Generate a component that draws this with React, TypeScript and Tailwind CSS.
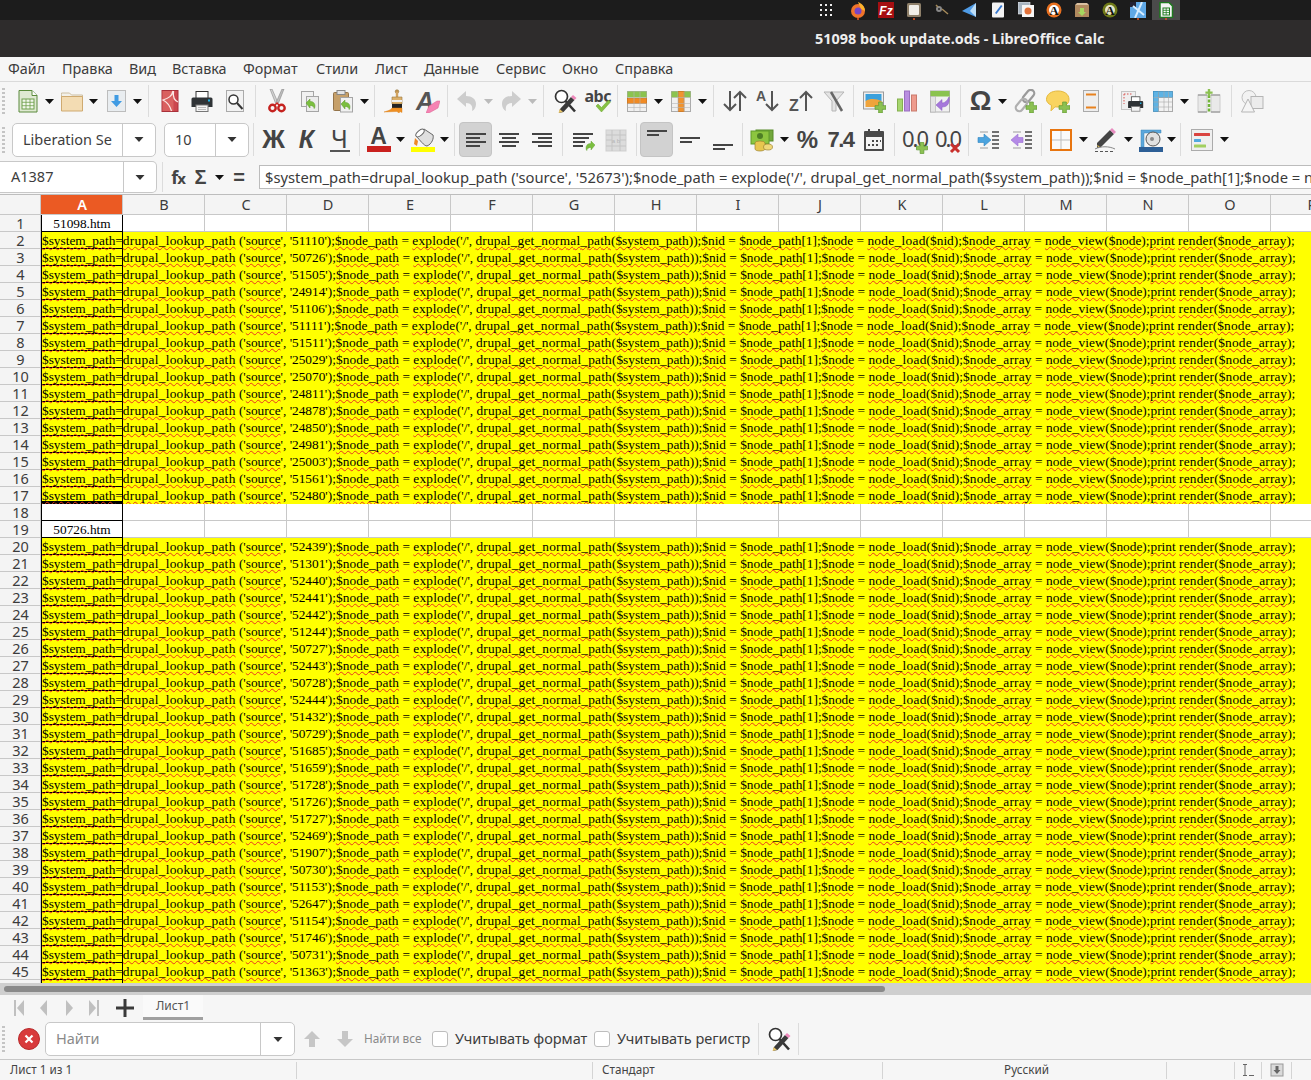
import React from "react";

const UI = "font-['Noto_Sans','Open_Sans',sans-serif]";

const S = ({ children, w = 24, h = 24, vb = "0 0 24 24" }: { children: React.ReactNode; w?: number; h?: number; vb?: string }) => (
  <svg width={w} height={h} viewBox={vb} className="block shrink-0">{children}</svg>
);

const PlusBadge = ({ x = 14, y = 14, s = 10 }: { x?: number; y?: number; s?: number }) => (
  <path
    d={`M${x + s * 0.33} ${y}h${s * 0.34}v${s * 0.33}h${s * 0.33}v${s * 0.34}h${-s * 0.33}v${s * 0.33}h${-s * 0.34}v${-s * 0.33}h${-s * 0.33}v${-s * 0.34}h${s * 0.33}z`}
    fill="#8cc152"
    stroke="#5f9a30"
    strokeWidth="0.7"
  />
);

const GreenArrow = ({ x = 0, y = 0 }: { x?: number; y?: number }) => (
  <path transform={`translate(${x} ${y})`} d="M0 4l4-4v2.400c3.400 0 5 2 5 4.600c0 1-.3 2-.8 2.600c-.3-2-1.700-3.200-4.200-3.200v2.600z" fill="#7bbf3f" stroke="#5a9a2a" strokeWidth="0.5" />
);

const NewCalc = () => (
  <S>
    <path d="M3 1.500h13l5 5v16.500h-18z" fill="#dfe9d2" stroke="#5b8a3c" />
    <path d="M16 1.500v5h5" fill="#fff" stroke="#5b8a3c" />
    <rect x="6" y="10" width="12" height="10" fill="#f2f7ec" stroke="#6fa04c" />
    <path d="M6 13.300h12M6 16.700h12M10 10v10M14 10v10" stroke="#6fa04c" strokeWidth="0.8" />
  </S>
);
const OpenFolder = () => (
  <S>
    <path d="M1.500 5.500v-1.500h8l2 2h11v3h-21z" fill="#f3f1ea" stroke="#cdbfa2" />
    <path d="M1.500 7.500h21v14.500h-21z" fill="#f3dcb3" stroke="#cfaa70" />
  </S>
);
const SaveIcon = () => (
  <S>
    <rect x="3.500" y="1.500" width="18" height="21" fill="#e9edf0" stroke="#bdbdbd" />
    <path d="M10.500 6h4v6h3.500l-5.500 6-5.500-6h3.500z" fill="#3f9be3" />
  </S>
);
const PdfIcon = () => (
  <S>
    <rect x="4" y="1.500" width="16" height="21" fill="#cc474e" stroke="#a8303a" />
    <path d="M4.500 2h11v20h-11z" fill="#d9605f" />
    <path d="M15 2c-1 5-4 7-10 9c4 2 7 6 8.500 11M15.500 2c-.5 4-.5 9 4.500 11" fill="none" stroke="#fbe6e3" strokeWidth="1.300" />
  </S>
);
const PrintIcon = ({ s = 24 }: { s?: number }) => (
  <S w={s} h={s}>
    <rect x="6" y="2.500" width="12" height="7" fill="#fff" stroke="#333" />
    <path d="M3 8.500h18a1.500 1.500 0 0 1 1.500 1.500v8h-21v-8a1.500 1.500 0 0 1 1.500-1.500z" fill="#2f3336" />
    <rect x="18" y="10.500" width="2" height="2" fill="#21b5e8" />
    <rect x="6" y="16" width="12" height="6.500" fill="#f4f4f4" stroke="#777" />
    <path d="M8 18.500h8M8 20.500h8" stroke="#bbb" />
  </S>
);
const Preview = () => (
  <S>
    <rect x="3.500" y="1.500" width="17" height="21" fill="#f2f2f2" stroke="#aaa" />
    <circle cx="10.500" cy="10.500" r="4.500" fill="#fff" stroke="#333" strokeWidth="1.500" />
    <path d="M14 14l5.500 6" stroke="#333" strokeWidth="2" />
  </S>
);
const Cut = () => (
  <S>
    <path d="M5 0l5.500 14 2-1.500L7 0z" fill="#d2d2d2" stroke="#888" strokeWidth="0.6" />
    <path d="M19 0l-5.500 14-2-1.500L17 0z" fill="#bdbdbd" stroke="#888" strokeWidth="0.6" />
    <circle cx="7.500" cy="19" r="3.200" fill="none" stroke="#c5221f" strokeWidth="2.400" />
    <circle cx="16.500" cy="19" r="3.200" fill="none" stroke="#c5221f" strokeWidth="2.400" />
    <path d="M10 16l2-2 2 2" fill="none" stroke="#c5221f" strokeWidth="1.500" />
  </S>
);
const Copy = () => (
  <S>
    <rect x="3.500" y="2.500" width="12" height="15" fill="#f1f1f1" stroke="#a5a5a5" />
    <rect x="8.500" y="7.500" width="12" height="15" fill="#ececec" stroke="#a5a5a5" />
    <GreenArrow x={8} y={10} />
  </S>
);
const Paste = () => (
  <S>
    <rect x="2.500" y="3.500" width="15" height="18" rx="1" fill="#c6a06a" stroke="#94744a" />
    <rect x="6" y="1.500" width="8" height="4" fill="#e3e3e3" stroke="#888" />
    <rect x="9.500" y="8.500" width="12" height="14.500" fill="#f1f1f1" stroke="#a5a5a5" />
    <GreenArrow x={10} y={11} />
  </S>
);
const Clone = () => (
  <S>
    <circle cx="14" cy="2.500" r="1.800" fill="#c4954f" stroke="#8a6a33" strokeWidth="0.5" />
    <rect x="12.800" y="3" width="2.400" height="6" fill="#d2a35f" />
    <path d="M9 8h10v7h-10z" fill="#dcb06a" stroke="#9a7a40" strokeWidth="0.6" />
    <rect x="9" y="11" width="10" height="2" fill="#f0f0f0" />
    <path d="M9 15h10v4h-10z" fill="#222" />
    <path d="M1 23c2-1 6-1 8-4h10v4.500l-2-1-1 1.500-2-1.500z" fill="#ef8f22" stroke="#d97a10" strokeWidth="0.4" />
  </S>
);
const ClearFmt = () => (
  <div className="relative w-[24px] h-[24px]">
    <span className="block text-center text-[25px] leading-[24px] font-bold italic text-[#555] font-['Liberation_Sans',sans-serif] pr-[5px]">A</span>
    <svg width="14" height="14" viewBox="0 0 14 14" className="absolute right-0 bottom-0 block"><path d="M3 7l8-5h3l-2 7-9 5h-3z" fill="#f583b3" stroke="#d8608f" strokeWidth="0.5" /></svg>
  </div>
);
const Undo = ({ flip = false }: { flip?: boolean }) => (
  <S>
    <g transform={flip ? "translate(24 0) scale(-1 1)" : undefined}>
      <path d="M2 10l9-8v5c6 0 10 3 10 8c0 3-1.500 6-4 7c1-5-1-8-6-8v4z" fill="#cdcdcd" />
    </g>
  </S>
);
const FindIcon = () => (
  <S>
    <circle cx="8.500" cy="7.500" r="6" fill="#fff" stroke="#333" strokeWidth="1.700" />
    <path d="M12.500 12l9.500 10.500" stroke="#333" strokeWidth="2.600" />
    <path d="M7 20l11-12 3.500 3-11 12-4.500 1z" fill="#3a3a3a" />
    <path d="M18 8l2-2 3.500 3-2 2z" fill="#ee88bb" />
    <path d="M5.500 24l1.200-4 3.300 3z" fill="#e8c56b" />
  </S>
);
const Spell = () => (
  <div className="relative w-[26px] h-[24px]">
    <span className="block text-center text-[16px] leading-[14px] tracking-[-0.5px] font-bold text-[#444] font-['Noto_Sans',sans-serif]">abc</span>
    <svg width="18" height="13" viewBox="0 0 18 13" className="absolute right-0 bottom-0 block"><path d="M3 6l2-2 3.500 3.500 7-7.500 2 2-9 10z" fill="#87c244" stroke="#6aa22e" strokeWidth="0.5" /></svg>
  </div>
);
const Grid = ({ kind }: { kind: "rows" | "cols" }) => (
  <S>
    <rect x="2.500" y="2.500" width="19" height="20" fill="#f0f0f0" stroke="#ababab" />
    <rect x="2.500" y="2.500" width="19" height="6" fill="#8bc34f" />
    {kind === "rows" ? <rect x="2.500" y="9.500" width="19" height="5" fill="#f08a24" stroke="#d06f0f" strokeWidth="0.7" /> : <rect x="9.500" y="2.500" width="5.500" height="20" fill="#f0932e" stroke="#d06f0f" strokeWidth="0.7" />}
    <path d="M2.500 8.500h19M2.500 14.500h19M2.500 18.500h19M9 2.500v20M15 2.500v20" stroke="#b5b5b5" strokeWidth="0.6" fill="none" />
  </S>
);
const ArrowUp = ({ x }: { x: number }) => <path d={`M${x} 22V3M${x - 6} 9l6-6 6 6`} fill="none" stroke="#555" strokeWidth="2" />;
const ArrowDn = ({ x }: { x: number }) => <path d={`M${x} 2v19M${x - 6} 15l6 6 6-6`} fill="none" stroke="#555" strokeWidth="2" />;
const Sort = () => (
  <S><ArrowDn x={7} /><ArrowUp x={17} /></S>
);
const SortAsc = () => (
  <S>
    <text x="0" y="12" fontFamily="Liberation Sans" fontWeight="700" fontSize="14" fill="#555">A</text>
    <ArrowDn x={16} />
  </S>
);
const SortDesc = () => (
  <S>
    <text x="0" y="22" fontFamily="Liberation Sans" fontWeight="700" fontSize="16" fill="#555">Z</text>
    <ArrowUp x={17} />
  </S>
);
const Filter = () => (
  <S>
    <path d="M2 3h20l-8 9v10h-4v-10z" fill="#e4e4e4" stroke="#b5b5b5" />
    <path d="M9 3l11 19" stroke="#666" strokeWidth="2.500" />
  </S>
);
const ImageAdd = () => (
  <S>
    <rect x="1.500" y="3" width="20" height="17" fill="#eee" stroke="#9a9a9a" />
    <rect x="3.500" y="5" width="16" height="7" fill="#3aa0dc" />
    <path d="M3.500 12c5-3 11-2 16 0v6h-16z" fill="#f0a43b" />
    <PlusBadge x={13} y={13} s={11} />
  </S>
);
const Chart = () => (
  <S>
    <rect x="2.500" y="10" width="5" height="12" fill="#a6d66f" stroke="#85b04f" />
    <rect x="9.500" y="2" width="5" height="20" fill="#b98de0" stroke="#9a6fc0" />
    <rect x="16.500" y="6" width="5" height="16" fill="#ee9b8d" stroke="#c97a6c" />
  </S>
);
const Pivot = () => (
  <S>
    <rect x="2.500" y="2" width="19" height="21" fill="#f1f1f1" stroke="#b0b0b0" />
    <rect x="2.500" y="2" width="19" height="5.500" fill="#8bc34f" />
    <rect x="2.500" y="7.500" width="5" height="15.500" fill="#e5e5e5" stroke="#b0b0b0" strokeWidth="0.6" />
    <path d="M21 8c1 7-2 10-7 10v3.500l-6-5.500 6-5.500v3.500c3 0 5-2 7-6z" fill="#a678db" stroke="#8758bf" strokeWidth="0.5" />
  </S>
);
const Omega = () => (
  <span className="text-[27px] leading-none font-bold text-[#444] font-['Liberation_Sans',sans-serif]">Ω</span>
);
const LinkIcon = () => (
  <S>
    <rect x="12" y="0" width="7" height="14" rx="3.500" fill="none" stroke="#9a9a9a" strokeWidth="2.200" transform="rotate(40 15.500 7)" />
    <rect x="5" y="9" width="7" height="14" rx="3.500" fill="none" stroke="#b0b0b0" strokeWidth="2.200" transform="rotate(40 8.500 16)" />
    <PlusBadge x={13} y={13} s={11} />
  </S>
);
const Comment = () => (
  <S>
    <path d="M12 2c6 0 11 3 11 8.500c0 5-5 7.500-11 7.500c-1 0-2 0-3-.2l-4 4 .5-5.500c-3-1.300-5-3.500-5-5.800c0-5.500 5-8.500 11.500-8.500z" fill="#f9d460" stroke="#e4b73a" />
    <PlusBadge x={13} y={13} s={11} />
  </S>
);
const HeaderFooter = () => (
  <S>
    <rect x="4.500" y="1.500" width="15" height="21" fill="#eeeeee" stroke="#aaa" />
    <path d="M7 5.500h10M7 18.500h10" stroke="#e8821e" strokeWidth="2" />
  </S>
);
const PrintArea = () => (
  <S>
    <rect x="1.500" y="2.500" width="14" height="18" fill="#efefef" stroke="#c5c5c5" />
    <path d="M4 5h9M4 5v10" stroke="#d9534f" strokeDasharray="1.500 1.500" fill="none" />
    <g transform="translate(7 6) scale(.72)"><rect x="6" y="2.500" width="12" height="7" fill="#fff" stroke="#333" /><path d="M3 8.500h18a1.500 1.500 0 0 1 1.500 1.500v8h-21v-8a1.500 1.500 0 0 1 1.500-1.500z" fill="#2f3336" /><rect x="18" y="10.500" width="2" height="2" fill="#21b5e8" /><rect x="6" y="16" width="12" height="6.500" fill="#f4f4f4" stroke="#777" /></g>
  </S>
);
const Freeze = () => (
  <S>
    <rect x="2.500" y="2.500" width="19" height="20" fill="#f2f2f2" stroke="#aaa" />
    <rect x="2.500" y="2.500" width="19" height="6" fill="#5eb3e4" stroke="#3d8fc4" strokeWidth="0.6" />
    <rect x="2.500" y="2.500" width="5" height="20" fill="#5eb3e4" stroke="#3d8fc4" strokeWidth="0.6" />
    <path d="M2.500 13h19M2.500 18h19M7.500 2.500v20M13 2.500v20M17.500 2.500v20M2.500 8.500h19" stroke="#a9a9a9" strokeWidth="0.6" />
  </S>
);
const Split = () => (
  <S>
    <rect x="1" y="6" width="9" height="17" fill="#e9e9e9" stroke="#ccc" />
    <rect x="14" y="6" width="9" height="17" fill="#e9e9e9" stroke="#ccc" />
    <path d="M1 6h9M14 6h9M1 23h9M14 23h9" stroke="#888" />
    <path d="M12 6v18" stroke="#72b43a" strokeWidth="2.500" strokeDasharray="3 1.500" />
    <path d="M10.800 0h2.400v2.400h2.400v2.400h-2.400v2.400h-2.400v-2.400h-2.400v-2.400h2.400z" fill="#8cc152" />
  </S>
);
const Shapes = () => (
  <S>
    <circle cx="9" cy="8.500" r="7" fill="#f2f2f2" stroke="#c0c0c0" />
    <rect x="11" y="7.500" width="12" height="12" fill="#ececec" stroke="#b5b5b5" />
    <path d="M8 10l6.500 13h-13z" fill="#f5f5f5" stroke="#b5b5b5" />
  </S>
);
const FontColor = () => (
  <div className="flex flex-col items-center w-[24px]">
    <span className="text-[23px] leading-[19px] font-bold text-[#444] font-['Liberation_Sans',sans-serif]">A</span>
    <div className="w-[24px] h-[6px] bg-[#c9211e]" />
  </div>
);
const BgColor = () => (
  <S>
    <path d="M5 8l8-7 9 6c1 3-1 9-6 11-3 0-7-6-11-10z" fill="#dfdfdf" stroke="#666" />
    <ellipse cx="9" cy="5" rx="5" ry="2.500" transform="rotate(-40 9 5)" fill="#fff" stroke="#666" />
    <path d="M4 10l3 3-1 5-3-2z" fill="#ee8a28" />
    <rect x="0" y="19" width="24" height="6" fill="#ffff00" />
  </S>
);
const Lines = ({ rows, stroke = "#444" }: { rows: [number, number, number][]; stroke?: string }) => (
  <S>
    {rows.map(([x1, x2, y], i) => (
      <path key={i} d={`M${x1} ${y}H${x2}`} stroke={stroke} strokeWidth="2" />
    ))}
  </S>
);
const Wrap = () => (
  <S>
    <path d="M2 6h20M2 10h16M2 14h12M2 18h10" stroke="#444" strokeWidth="2" />
    <path transform="translate(24 12) scale(-1 1)" d="M0 5l4-4v2.400c3.400 0 5 2 5 4.600c0 1-.3 2-.8 2.600c-.3-2-1.700-3.200-4.200-3.200v2.600z" fill="#7bbf3f" stroke="#5a9a2a" strokeWidth="0.4" />
  </S>
);
const Merge = () => (
  <S>
    <rect x="2" y="2" width="20" height="21" fill="#dcdcdc" stroke="#cfcfcf" />
    <path d="M2 7h20M2 18h20M8 2v21M16 2v21M2 12h6M16 12h6" stroke="#c4c4c4" />
    <text x="12" y="15" textAnchor="middle" fontSize="6" fill="#b4b4b4" fontFamily="Liberation Sans">a b</text>
  </S>
);
const Currency = () => (
  <S>
    <rect x="6" y="2" width="17" height="11" fill="#72a73c" stroke="#568a28" />
    <rect x="1" y="3" width="18" height="13" fill="#8cc53f" stroke="#5f9a2a" />
    <circle cx="10" cy="8" r="3" fill="#4d7e25" />
    <ellipse cx="10" cy="15" rx="5" ry="2" fill="#e8c64e" stroke="#9c8330" strokeWidth="0.7" />
    <path d="M5 15v6c0 1 2 2 5 2s5-1 5-2v-6" fill="#e8c64e" stroke="#9c8330" strokeWidth="0.7" />
    <ellipse cx="18" cy="19" rx="4.500" ry="3" fill="#f0d878" stroke="#9c8330" strokeWidth="0.7" />
  </S>
);
const DateIcon = () => (
  <S>
    <rect x="2" y="3" width="20" height="20" fill="#4a4a4a" rx="1" />
    <rect x="4" y="9" width="16" height="12" fill="#f5f5f5" />
    <rect x="6" y="1" width="2" height="4" fill="#4a4a4a" />
    <rect x="16" y="1" width="2" height="4" fill="#4a4a4a" />
    <path d="M10 12h2v2h-2zM14 12h2v2h-2zM18 12h1v2h-1zM6 16h2v2h-2zM10 16h2v2h-2zM14 16h2v2h-2z" fill="#4a4a4a" />
  </S>
);
const Decimal = ({ del = false }: { del?: boolean }) => (
  <div className="relative w-[26px] h-[24px]">
    <span className="block text-center text-[22px] leading-[21px] tracking-[-2px] text-[#444] font-['Noto_Sans',sans-serif]">0.0</span>
    <svg width="12" height="12" viewBox="0 0 12 12" className="absolute right-0 bottom-[-2px] block">
      {del ? <path d="M2 2l8 8M10 2l-8 8" stroke="#c9302c" strokeWidth="3" /> : <PlusBadge x={0.500} y={0.500} s={11} />}
    </svg>
  </div>
);
const Indent = ({ dec = false }: { dec?: boolean }) => (
  <S>
    <path d="M3 4h8M3 20h8" stroke="#bbb" strokeWidth="1.500" />
    <path d="M15 4h7M15 8h7M15 12h7M15 16h7M15 20h7" stroke="#444" strokeWidth="1.500" />
    {dec ? <path d="M13 9.500v5h-5v3.500l-7-6 7-6v3.500z" fill="#b48ae6" stroke="#9a6fd4" strokeWidth="0.6" /> : <path d="M1 9.500h6v-3.500l7 6-7 6v-3.500h-6z" fill="#4ba3de" stroke="#2f85bf" strokeWidth="0.6" />}
  </S>
);
const Borders = () => (
  <S>
    <rect x="2" y="2" width="20" height="20" fill="#fafafa" stroke="#e8750f" strokeWidth="2" />
    <path d="M12 3v18M3 12h18" stroke="#bdbdbd" strokeWidth="1" />
  </S>
);
const LineStyle = () => (
  <S>
    <path d="M3 15L16 2l4 4L7 19l-4 1z" fill="#444" />
    <path d="M16 2l2-2 4 4-2 2z" fill="#e88cc0" />
    <path d="M3 17l1 2 2-.5z" fill="#e8c65b" />
    <path d="M1 21c6-3 14-3 20 0" fill="none" stroke="#888" strokeWidth="1" />
    <path d="M1 23.500h3M6 23.500h3M11 23.500h3M16 23.500h3" stroke="#555" />
  </S>
);
const BorderColor = () => (
  <S>
    <path d="M2 19v-17h20v3h-17v14z" fill="#5ba7db" stroke="#3d84b5" strokeWidth="0.5" />
    <ellipse cx="14" cy="11" rx="7" ry="7" fill="#e1e1e1" stroke="#555" />
    <circle cx="13" cy="11" r="2" fill="#888" />
    <rect x="0" y="19" width="24" height="6" fill="#2d5f96" />
  </S>
);
const Cond = () => (
  <S>
    <rect x="1.500" y="1.500" width="21" height="21" fill="#efefef" stroke="#ababab" />
    <rect x="4" y="5" width="16" height="3" rx="0.500" fill="#d9433f" />
    <rect x="4" y="11" width="7" height="3" rx="0.500" fill="#51a9e0" />
    <rect x="4" y="16.500" width="12" height="3" rx="0.500" fill="#a2cf5f" />
  </S>
);

const Caret = ({ c = "#111", s = 9 }: { c?: string; s?: number }) => (
  <svg width={s} height={5} viewBox="0 0 9 5" className="block shrink-0"><path d="M0 0h9L4.500 5z" fill={c} /></svg>
);

const B = ({ children, w = "w-[33px]", active = false }: { children: React.ReactNode; w?: string; active?: boolean }) => (
  <div className={`${w} h-[35px] shrink-0 flex items-center justify-center rounded-[4px] ${active ? "bg-[#d2d2d2] border border-[#c4c4c4]" : ""}`}>{children}</div>
);
const C = ({ w = "w-[11px]", c }: { w?: string; c?: string }) => (
  <div className={`${w} shrink-0 flex items-center justify-center`}><Caret c={c} /></div>
);
const Sep = ({ w = "w-[8px]" }: { w?: string }) => (
  <div className={`${w} shrink-0 self-stretch flex justify-center py-[3px]`}><div className="w-px bg-[#dcdcdc]" /></div>
);
const Grip = ({ w }: { w: string }) => (
  <div className={`${w} shrink-0 flex flex-col gap-[2px] pl-[2px] justify-center`}>
    {[0, 1, 2, 3, 4, 5, 6].map((i) => <div key={i} className="w-[3px] h-[2px] bg-[#c4c4c4]" />)}
  </div>
);

const Combo = ({ text, w, divider }: { text: string; w: string; divider: string }) => (
  <div className={`${w} h-[34px] shrink-0 flex bg-white border border-[#c8c8c8] rounded-[5px]`}>
    <div className="flex-1 flex items-center pl-[10px] text-[14.500px] text-[#3d3d3d] whitespace-nowrap overflow-hidden">{text}</div>
    <div className={`${divider} shrink-0 border-l border-[#c8c8c8] flex items-center justify-center`}><Caret c="#333" s={10} /></div>
  </div>
);

const Menu = () => {
  const items: [string, string][] = [["Файл", "w-[54px]"], ["Правка", "w-[67px]"], ["Вид", "w-[43px]"], ["Вставка", "w-[71px]"], ["Формат", "w-[73px]"], ["Стили", "w-[59px]"], ["Лист", "w-[49px]"], ["Данные", "w-[72px]"], ["Сервис", "w-[66px]"], ["Окно", "w-[53px]"], ["Справка", "w-[70px]"]];
  return (
    <div className="h-[25px] shrink-0 flex items-center pl-[8px] border-b border-[#dadada] text-[14.400px] text-[#3c3c3c] bg-[#f6f6f6]">
      {items.map(([t, w]) => <div key={t} className={`${w} shrink-0 whitespace-nowrap`}>{t}</div>)}
    </div>
  );
};

const Toolbar1 = () => (
  <div className="h-[38px] shrink-0 flex items-center">
    <Grip w="w-[11px]" />
    <B><NewCalc /></B><C />
    <B><OpenFolder /></B><C />
    <B><SaveIcon /></B><C />
    <Sep w="w-[10px]" />
    <B><PdfIcon /></B>
    <B w="w-[32px]"><PrintIcon /></B>
    <B><Preview /></B>
    <Sep w="w-[9px]" />
    <B><Cut /></B>
    <B><Copy /></B>
    <B><Paste /></B><C />
    <Sep />
    <B><Clone /></B>
    <B><ClearFmt /></B>
    <Sep w="w-[6px]" />
    <B><Undo /></B><C c="#bbb" />
    <B><Undo flip /></B><C c="#bbb" />
    <Sep w="w-[10px]" />
    <B><FindIcon /></B>
    <B><Spell /></B>
    <Sep w="w-[6px]" />
    <B><Grid kind="rows" /></B><C />
    <B><Grid kind="cols" /></B><C />
    <Sep w="w-[10px]" />
    <B><Sort /></B>
    <B><SortAsc /></B>
    <B><SortDesc /></B>
    <B><Filter /></B>
    <Sep w="w-[7px]" />
    <B><ImageAdd /></B>
    <B><Chart /></B>
    <B><Pivot /></B>
    <Sep />
    <B><Omega /></B><C />
    <B><LinkIcon /></B>
    <B><Comment /></B>
    <B><HeaderFooter /></B>
    <Sep w="w-[10px]" />
    <B w="w-[29px]"><PrintArea /></B>
    <B><Freeze /></B><C />
    <B w="w-[37px]"><Split /></B>
    <Sep w="w-[8px]" />
    <B><Shapes /></B>
  </div>
);

const Toolbar2 = () => (
  <div className="h-[39px] shrink-0 flex items-center">
    <Grip w="w-[12px]" />
    <Combo text="Liberation Se" w="w-[144px]" divider="w-[33px]" />
    <div className="w-[8px] shrink-0" />
    <Combo text="10" w="w-[85px]" divider="w-[33px]" />
    <Sep />
    <B><span className="text-[25px] leading-none font-bold text-[#444] font-['Liberation_Sans',sans-serif]">Ж</span></B>
    <B><span className="text-[25px] leading-none font-bold italic text-[#444] font-['Liberation_Sans',sans-serif]">К</span></B>
    <B>
      <div className="flex flex-col items-center">
        <span className="text-[25px] leading-[23px] text-[#444] font-['Noto_Sans',sans-serif]">Ч</span>
        <div className="w-[20px] h-[2px] bg-[#555]" />
      </div>
    </B>
    <Sep w="w-[6px]" />
    <B><FontColor /></B><C />
    <B><BgColor /></B><C />
    <Sep w="w-[9px]" />
    <B active><Lines rows={[[2, 22, 6], [2, 16, 10], [2, 22, 14], [2, 16, 18]]} /></B>
    <B><Lines rows={[[2, 22, 6], [5, 19, 10], [2, 22, 14], [5, 19, 18]]} /></B>
    <B><Lines rows={[[2, 22, 6], [8, 22, 10], [2, 22, 14], [8, 22, 18]]} /></B>
    <Sep />
    <B><Wrap /></B>
    <B><Merge /></B>
    <Sep />
    <B active><Lines rows={[[2, 22, 3], [2, 14, 7]]} /></B>
    <B><Lines rows={[[2, 22, 10], [2, 14, 14]]} /></B>
    <B><Lines rows={[[2, 22, 17], [2, 14, 21]]} /></B>
    <Sep w="w-[6px]" />
    <B><Currency /></B><C w="w-[13px]" />
    <B><span className="text-[24px] leading-none font-bold text-[#444] font-['Liberation_Sans',sans-serif]">%</span></B>
    <B><span className="text-[22px] leading-none font-bold tracking-[-1.500px] text-[#444] font-['Liberation_Sans',sans-serif]">7.4</span></B>
    <B><DateIcon /></B>
    <Sep />
    <B><Decimal /></B>
    <B><Decimal del /></B>
    <Sep />
    <B><Indent /></B>
    <B><Indent dec /></B>
    <Sep w="w-[6px]" />
    <B><Borders /></B><C w="w-[12px]" />
    <B><LineStyle /></B><C w="w-[12px]" />
    <B><BorderColor /></B><C w="w-[9px]" />
    <Sep w="w-[9px]" />
    <B><Cond /></B><C w="w-[12px]" />
  </div>
);

const FormulaBar = () => (
  <div className="h-[36px] shrink-0 flex items-center border-b border-[#bdbdbd] overflow-hidden pt-[1px]">
    <div className="w-[157px] h-[32px] shrink-0 flex bg-white border border-[#c8c8c8] border-l-0 rounded-r-[5px]">
      <div className="flex-1 flex items-center pl-[11px] text-[14.500px] text-[#3d3d3d]">A1387</div>
      <div className="w-[33px] border-l border-[#c8c8c8] flex items-center justify-center"><Caret c="#333" s={10} /></div>
    </div>
    <div className="w-[10px] shrink-0 self-stretch flex justify-center py-[2px]"><div className="w-px bg-[#dcdcdc]" /></div>
    <div className="w-[22px] shrink-0 text-center text-[18px] leading-none font-bold tracking-[-1px] text-[#444] font-['Noto_Sans',sans-serif]">f<span className="text-[15px]">x</span></div>
    <div className="w-[23px] shrink-0 text-center text-[20px] leading-none font-bold text-[#444] font-['Liberation_Sans',sans-serif]">Σ</div>
    <C w="w-[14px]" />
    <div className="w-[26px] shrink-0 text-center text-[20px] leading-none font-bold text-[#444] font-['Liberation_Sans',sans-serif]">=</div>
    <div className="ml-[7px] h-[24px] w-[1100px] shrink-0 bg-white border border-[#bcbcbc] flex items-center pl-[5px] text-[14.750px] text-[#3a3a3a] whitespace-nowrap">
      {"$system_path=drupal_lookup_path ('source', '52673');$node_path = explode('/', drupal_get_normal_path($system_path));$nid = $node_path[1];$node = node_load($nid);$node_array = node_view($node);print render($node_array);"}
    </div>
  </div>
);

const letters = "ABCDEFGHIJKLMNOP".split("");
const ColHeader = () => (
  <div className="h-[20px] shrink-0 flex bg-[#f4f4f4] border-b border-[#c8c8c8] overflow-hidden text-[14.500px] text-[#3c3c3c]">
    <div className="w-[41px] shrink-0 border-r border-[#c8c8c8]" />
    {letters.map((l) => (
      <div key={l} className={`w-[82px] shrink-0 flex items-center justify-center pl-[1px] border-r border-[#c8c8c8] ${l === "A" ? "bg-[#eb5a23] text-white font-semibold" : ""}`}>{l}</div>
    ))}
  </div>
);

const W = ({ children, t = "" }: { children: React.ReactNode; t?: string }) => (
  <span className={`underline decoration-wavy decoration-[#e8351f] decoration-1 underline-offset-[1px] [text-decoration-skip-ink:none] ${t}`}>{children}</span>
);

const CodeText = ({ id }: { id: string }) => (
  <>
    <W>$system_path</W>=<W t="tracking-[0.3px]">drupal_lookup_path</W> ('<W>source</W>', '{id}');<W t="tracking-[0.1px]">$node_path</W> = <W t="tracking-[0.2px]">explode</W>('/', <W t="tracking-[0.2px]">drupal_get_normal_path</W>(<W>$system_path</W>));<W>$nid</W> = <W>$node_path</W>[1];<W>$node</W> = <W t="tracking-[0.3px]">node_load</W>(<W>$nid</W>);<W t="tracking-[0.2px]">$node_array</W> = <W t="tracking-[0.1px]">node_view</W>(<W>$node</W>);<W>print</W> <W t="tracking-[0.2px]">render</W>(<W t="tracking-[0.2px]">$node_array</W>);
  </>
);

const RowHead = ({ n }: { n: number }) => (
  <div className="w-[41px] shrink-0 bg-[#f4f4f4] border-r border-b border-[#c8c8c8] flex items-center justify-center pl-[1px] text-[14.500px] leading-none text-[#3c3c3c] font-['Noto_Sans',sans-serif]">{n}</div>
);

const YellowRow = ({ n, id, last = false }: { n: number; id: string; last?: boolean }) => (
  <div className="h-[17px] shrink-0 flex">
    <RowHead n={n} />
    <div className={`w-[82px] shrink-0 border-l border-r border-black border-b ${last ? "border-b-[3px]" : ""}`}>
      <div className="whitespace-nowrap text-[13.330px] leading-[17px] text-black font-['Liberation_Serif',serif]"><CodeText id={id} /></div>
    </div>
  </div>
);

const WhiteRow = ({ n, text }: { n: number; text: string }) => (
  <div className="h-[17px] shrink-0 flex bg-white">
    <RowHead n={n} />
    <div className="w-[82px] shrink-0 border-l border-r border-b border-black text-center text-[13.330px] leading-[17px] text-black font-['Liberation_Serif',serif]">{text}</div>
    {letters.slice(1).map((l) => <div key={l} className="w-[82px] shrink-0 border-r border-b border-[#c8c8c8]" />)}
  </div>
);

const block1 = ["51110", "50726", "51505", "24914", "51106", "51111", "51511", "25029", "25070", "24811", "24878", "24850", "24981", "25003", "51561", "52480"];
const block2 = ["52439", "51301", "52440", "52441", "52442", "51244", "50727", "52443", "50728", "52444", "51432", "50729", "51685", "51659", "51728", "51726", "51727", "52469", "51907", "50730", "51153", "52647", "51154", "51746", "50731", "51363"];

const Sheet = () => (
  <div className="h-[768px] shrink-0 overflow-hidden flex flex-col bg-[#ffff00]">
    <WhiteRow n={1} text="51098.htm" />
    {block1.map((id, i) => <YellowRow key={id} n={i + 2} id={id} last={i === block1.length - 1} />)}
    <WhiteRow n={18} text="" />
    <WhiteRow n={19} text="50726.htm" />
    {block2.map((id, i) => <YellowRow key={id} n={i + 20} id={id} />)}
    <div className="h-[3px] shrink-0 flex">
      <div className="w-[41px] shrink-0 bg-[#f4f4f4] border-r border-[#c8c8c8]" />
      <div className="w-[82px] shrink-0 border-l border-r border-black" />
    </div>
  </div>
);

const Scroll = () => (
  <div className="h-[12px] shrink-0 bg-[#cfcfcf] flex items-center pl-[4px]">
    <div className="w-[881px] h-[6px] rounded-full bg-[#8a8a8a]" />
  </div>
);

const Nav = ({ d, c = "#c0c0c0" }: { d: string; c?: string }) => (
  <div className="w-[25px] shrink-0 flex justify-center"><svg width="12" height="18" viewBox="0 0 12 18" className="block"><path d={d} fill={c} /></svg></div>
);

const Tabs = () => (
  <div className="h-[25px] shrink-0 flex pl-[6px] bg-[#f6f6f6]">
    <div className="flex items-center">
      <Nav d="M1 1h2v16h-2zM11 1v16l-7-8z" />
      <Nav d="M9 1v16l-7-8z" />
      <Nav d="M3 1v16l7-8z" />
      <Nav d="M1 1v16l7-8zM9 1h2v16h-2z" />
    </div>
    <div className="w-[37px] shrink-0 flex items-center justify-center">
      <svg width="18" height="18" viewBox="0 0 18 18" className="block"><path d="M7.500 0h3v7.500h7.500v3h-7.500v7.500h-3v-7.500h-7.500v-3h7.500z" fill="#3a3a3a" /></svg>
    </div>
    <div className="w-[60px] shrink-0 bg-[#fafafa] border-b-[3px] border-[#a0a0a0] flex items-center justify-center text-[12px] text-[#555]">Лист1</div>
  </div>
);

const Check = () => <div className="w-[16px] h-[16px] shrink-0 bg-white border border-[#bdbdbd] rounded-[3px]" />;

const FindBar = () => (
  <div className="h-[40px] shrink-0 flex items-center border-b border-[#c8c8c8] pb-[1px] text-[14.500px] text-[#3c3c3c]">
    <Grip w="w-[18px]" />
    <div className="w-[27px] shrink-0 flex justify-start">
      <svg width="22" height="22" viewBox="0 0 22 22" className="block"><circle cx="11" cy="11" r="10.500" fill="#d83a3c" stroke="#b82a2c" /><path d="M7.500 7.500l7 7M14.500 7.500l-7 7" stroke="#fff" strokeWidth="2.200" /></svg>
    </div>
    <div className="w-[250px] h-[34px] shrink-0 flex bg-white border border-[#c8c8c8] rounded-[5px]">
      <div className="flex-1 flex items-center pl-[10px] text-[#8a8a8a]">Найти</div>
      <div className="w-[34px] border-l border-[#c8c8c8] flex items-center justify-center"><Caret c="#333" s={10} /></div>
    </div>
    <div className="w-[33px] shrink-0 flex justify-center"><svg width="18" height="18" viewBox="0 0 18 18" className="block"><path d="M9 1l8 8h-5v8h-6v-8h-5z" fill="#c6c6c6" /></svg></div>
    <div className="w-[33px] shrink-0 flex justify-center"><svg width="18" height="18" viewBox="0 0 18 18" className="block"><path d="M9 17l8-8h-5v-8h-6v8h-5z" fill="#c6c6c6" /></svg></div>
    <div className="w-[71px] shrink-0 pl-[3px] text-[11.800px] text-[#8a8a8a] whitespace-nowrap">Найти все</div>
    <Check />
    <div className="w-[146px] shrink-0 pl-[7px] whitespace-nowrap">Учитывать формат</div>
    <Check />
    <div className="w-[148px] shrink-0 pl-[7px] whitespace-nowrap">Учитывать регистр</div>
    <Sep w="w-[1px]" />
    <div className="w-[39px] shrink-0 flex justify-center"><FindIcon /></div>
    <Sep w="w-[1px]" />
  </div>
);

const Status = () => (
  <div className="flex-1 flex text-[11.700px] text-[#444] items-center">
    <div className="w-[297px] shrink-0 pl-[10px] border-r border-[#d4d4d4] h-[17px] flex items-center">Лист 1 из 1</div>
    <div className="w-[296px] shrink-0 border-r border-[#d4d4d4] h-[17px]" />
    <div className="w-[290px] shrink-0 pl-[9px] border-r border-[#d4d4d4] h-[17px] flex items-center">Стандарт</div>
    <div className="w-[284px] shrink-0 border-r border-[#d4d4d4] h-[17px] flex items-center justify-center pl-[4px]">Русский</div>
    <div className="w-[68px] shrink-0 border-r border-[#d4d4d4] h-[17px]" />
    <div className="w-[27px] shrink-0 border-r border-[#d4d4d4] h-[17px] flex items-center justify-center">
      <svg width="14" height="14" viewBox="0 0 14 14" className="block"><path d="M2 1.500h4M2 12.500h4M4 1.500v11M8 12.500h5" stroke="#666" fill="none" /></svg>
    </div>
    <div className="w-[30px] shrink-0 border-r border-[#d4d4d4] h-[17px] flex items-center justify-center">
      <svg width="14" height="14" viewBox="0 0 14 14" className="block"><rect x="1" y="1" width="12" height="12" fill="#dadada" stroke="#999" /><path d="M5.500 3h3v4h2l-3.500 4-3.500-4h2z" fill="#666" /></svg>
    </div>
  </div>
);

const Slot = ({ children, dot = false, active = false }: { children: React.ReactNode; dot?: boolean; active?: boolean }) => (
  <div className={`w-[28px] h-[20px] shrink-0 flex flex-col items-center pt-[2px] ${active ? "bg-[#4b4b4b]" : ""}`}>
    <svg width="16" height="16" viewBox="0 0 16 16" className="block">{children}</svg>
    <div className={`w-[2px] h-[2px] rounded-full ${dot ? "bg-[#e95420]" : ""}`} />
  </div>
);

const Tray = () => (
  <div className="h-[20px] shrink-0 bg-[#1c1c1c] flex pl-[812px]">
    <Slot>{[3, 8, 13].map((y) => [3, 8, 13].map((x) => <rect key={`${x}${y}`} x={x - 1} y={y - 1} width="2" height="2" fill="#eee" />))}</Slot>
    <div className="w-[4px] shrink-0" />
    <Slot dot><circle cx="8" cy="9" r="7" fill="#f0742a" /><path d="M8 0c3 1 7 4 7 9l-4-2z" fill="#fcb32c" /><circle cx="8" cy="9" r="3.500" fill="#7645c8" /></Slot>
    <Slot><rect x="0" y="0" width="16" height="16" fill="#a50f12" /><text x="8" y="12.500" textAnchor="middle" fontSize="12" fontWeight="700" fontStyle="italic" fontFamily="Liberation Sans" fill="#fff">Fz</text></Slot>
    <Slot dot><rect x="1" y="1" width="14" height="14" rx="1.500" fill="#8e806a" /><rect x="3" y="3" width="10" height="10" rx="1" fill="#f1efe9" /></Slot>
    <Slot><circle cx="5" cy="7" r="3" fill="#888" /><path d="M2 3l2 2M8 7l6 5" stroke="#a58a5a" strokeWidth="1.500" /><circle cx="5" cy="7" r="1" fill="#222" /></Slot>
    <Slot><path d="M14 1v14l-14-6z" fill="#4e9be6" /><path d="M14 1v14l-6-6z" fill="#bcdcf5" /></Slot>
    <Slot><rect x="2" y="0.500" width="12" height="15" rx="1" fill="#f3f3f3" /><path d="M5 11l6-8 1.500 1-6 8z" fill="#3577d0" /></Slot>
    <Slot><rect x="0" y="0" width="12" height="12" fill="#a9b6c2" stroke="#eee" strokeWidth="0.600" /><rect x="4" y="3" width="12" height="12" fill="#f6f6f6" /><circle cx="10" cy="9" r="3.500" fill="#e0713a" /></Slot>
    <Slot><circle cx="8" cy="8" r="7.500" fill="#e8701f" /><circle cx="8" cy="8" r="5" fill="#fff" /><text x="8" y="12.500" textAnchor="middle" fontSize="13" fontWeight="700" fontFamily="Liberation Serif" fill="#111">A</text></Slot>
    <Slot><path d="M1 3h14v12h-14z" fill="#b0895e" /><path d="M1 3l2-2h10l2 2z" fill="#d9c0a0" /><path d="M6 6h4v4h2l-4 4-4-4h2z" fill="#a6d65f" /></Slot>
    <Slot><circle cx="8" cy="8" r="7.500" fill="#6f7a18" /><circle cx="8" cy="8" r="5" fill="#e5e4c8" /><text x="8" y="12.500" textAnchor="middle" fontSize="13" fontWeight="700" fontFamily="Liberation Serif" fill="#111">A</text></Slot>
    <Slot dot><rect x="0" y="0" width="16" height="16" fill="#5fa8e6" /><rect x="0" y="0" width="6" height="5" fill="#223" /><path d="M12 0L5 16M3 4l11 9" stroke="#d5ecff" strokeWidth="2" /></Slot>
    <Slot dot active><path d="M2 0.500h9l3.500 3.500v11.500h-12.500z" fill="#f5f5f5" stroke="#1f7a1f" strokeWidth="1.500" /><rect x="5" y="6" width="6.500" height="7" fill="#fff" stroke="#1f7a1f" /><path d="M5 8.300h6.500M5 10.600h6.500M8.200 6v7" stroke="#1f7a1f" strokeWidth="0.800" /></Slot>
  </div>
);

export default function App() {
  return (
    <div className={`w-[1311px] h-[1080px] overflow-hidden flex flex-col bg-[#f6f6f6] ${UI}`}>
      <Tray />
      <div className="h-[37px] shrink-0 bg-[#2e2c2c] flex items-center pl-[815px] text-[14.400px] font-bold text-[#eeeeee] whitespace-nowrap">51098 book update.ods - LibreOffice Calc</div>
      <Menu />
      <Toolbar1 />
      <Toolbar2 />
      <FormulaBar />
      <ColHeader />
      <Sheet />
      <Scroll />
      <Tabs />
      <FindBar />
      <Status />
    </div>
  );
}
